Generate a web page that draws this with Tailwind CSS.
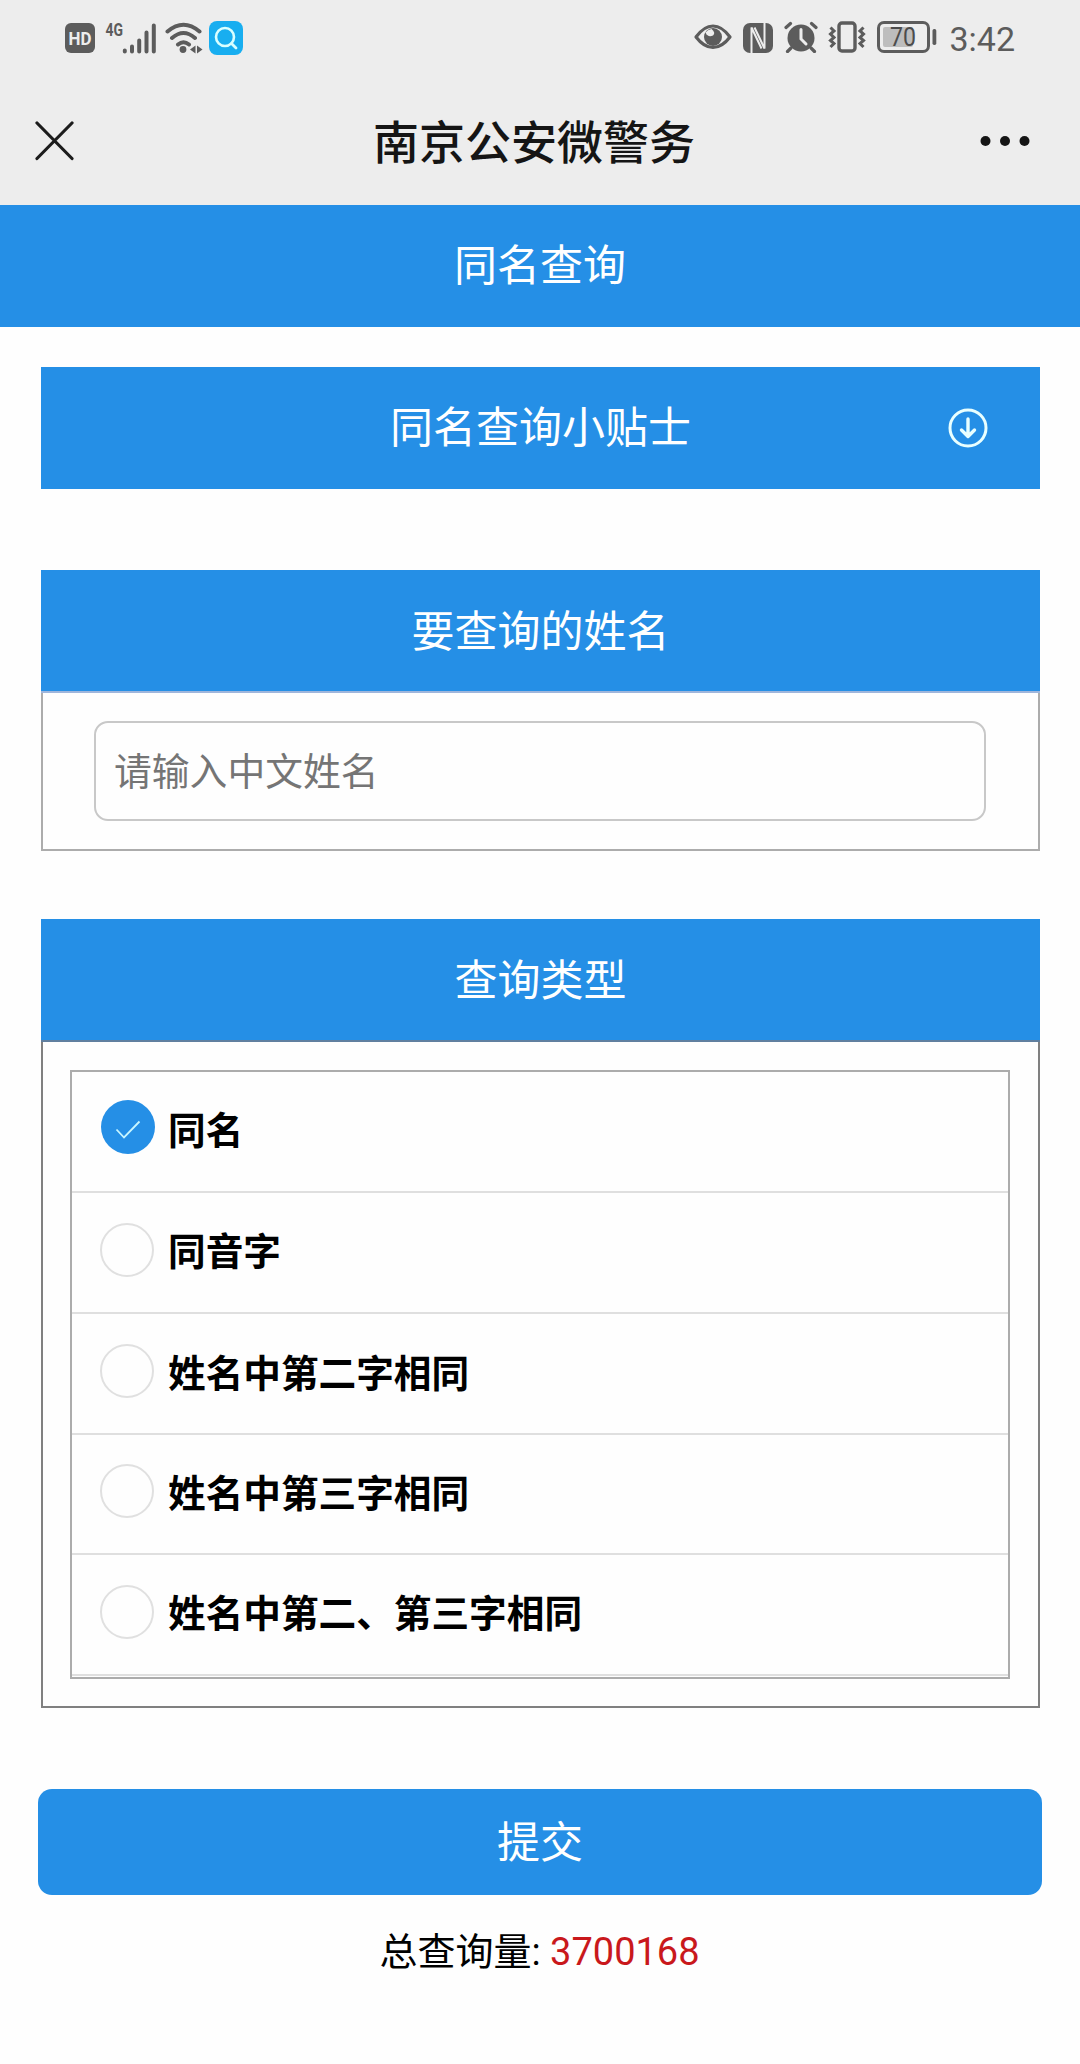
<!DOCTYPE html>
<html lang="zh-CN">
<head>
<meta charset="utf-8">
<title>同名查询</title>
<script src="https://cdn.jsdelivr.net/npm/@tailwindcss/browser@4"></script>
</head>
<body class="w-[1080px] h-[2064px] overflow-hidden bg-[#fefefe] font-['Noto_Sans_CJK_SC',sans-serif] text-black">
<header class="h-[205px] bg-[#ededed]">
  <div class="h-[76px] flex items-center justify-between pl-[65px] pr-[65px] text-[#5c5c5c]">
    <div class="flex items-center">
      <svg class="w-[30px] h-[30px]" viewBox="0 0 30 30"><rect width="30" height="30" rx="6" fill="#5c5c5c"/><text x="15" y="21.5" text-anchor="middle" textLength="23" lengthAdjust="spacingAndGlyphs" font-family="Roboto" font-weight="700" font-size="18" fill="#ededed">HD</text></svg>
      <svg class="w-[52px] h-[36px] ml-[10px] mb-[4px]" viewBox="0 -4 52 36"><text x="0.500" y="14" textLength="17.500" lengthAdjust="spacingAndGlyphs" font-family="Roboto" font-weight="700" font-size="18" fill="#5c5c5c">4G</text><g stroke="#5c5c5c" stroke-width="4" stroke-linecap="round"><path d="M19.800 28.600v.8M27 24.500v5M34.200 18.500v11M41.500 10.500v19M48.800 3.500v26"/></g></svg>
      <svg class="w-[38px] h-[32px] ml-[8px]" viewBox="0 0 38 32"><g fill="none" stroke="#5c5c5c" stroke-width="4" stroke-linecap="round"><path d="M2.500 9.500Q18.500-4 34.500 9.500M7 16Q18.500 6 30 16M13 22.500Q18.500 18 24 22.500"/></g><circle cx="18" cy="27.500" r="3.400" fill="#5c5c5c"/><path d="M25 27.500l5.500-4v8zM37.500 27.500l-5.500-4v8z" fill="#5c5c5c"/></svg>
      <svg class="w-[34px] h-[34px] ml-[6px]" viewBox="0 0 34 34"><rect width="34" height="34" rx="8" fill="#18aef0"/><circle cx="16" cy="16" r="9" fill="none" stroke="#d9ffff" stroke-width="2.600"/><path d="M22.500 22.500l4.500 4.500" stroke="#d9ffff" stroke-width="2.800" stroke-linecap="round"/></svg>
    </div>
    <div class="flex items-center">
      <svg class="w-[38px] h-[28px] mb-[2px]" viewBox="0 0 38 28"><path d="M2 14Q10 3 19 3T36 14Q28 24.500 19 24.500T2 14z" fill="none" stroke="#5c5c5c" stroke-width="3.200" stroke-linejoin="round"/><circle cx="19" cy="14" r="9" fill="#5c5c5c"/><path d="M11.500 9.500Q14 15 19 12.500Q22 9.500 17.500 6Q13.500 6.500 11.500 9.500z" fill="#ededed"/></svg>
      <svg class="w-[30px] h-[30px] ml-[11px] mb-[1px]" viewBox="0 0 30 30"><rect width="30" height="30" rx="7" fill="#5c5c5c"/><path d="M8.500 30V4.500L18.500 25.500M21.500 0V25.500L11.500 4.500" fill="none" stroke="#ededed" stroke-width="2"/></svg>
      <svg class="w-[34px] h-[32px] ml-[11px] mb-[2px]" viewBox="0 0 34 32"><circle cx="17" cy="17" r="13.500" fill="#5c5c5c"/><path d="M2 6.500L6.500 2.500M32 6.500L27.500 2.500M7 27l-3.500 3.500M27 27l3.500 3.500" stroke="#5c5c5c" stroke-width="3.200" stroke-linecap="round"/><path d="M17 8.500v9.500l5 5" fill="none" stroke="#ededed" stroke-width="3" stroke-linecap="round"/></svg>
      <svg class="w-[38px] h-[32px] ml-[10px] mb-[2px]" viewBox="0 0 38 32"><rect x="11" y="2" width="16" height="28" rx="3" fill="none" stroke="#5c5c5c" stroke-width="3.400"/><path d="M2.500 6.500l3.500 3.500-3.500 3 3.500 3.500-3.500 3 3.500 3-3.500 3.500M35.500 6.500L32 10l3.500 3-3.500 3.500 3.500 3-3.500 3 3.500 3.500" fill="none" stroke="#5c5c5c" stroke-width="3"/></svg>
      <svg class="w-[60px] h-[32px] ml-[11px] mr-[1px] mb-[2px]" viewBox="0 0 60 32"><rect x="1.500" y="1.500" width="50" height="29" rx="5.500" fill="none" stroke="#5c5c5c" stroke-width="3"/><rect x="6" y="6" width="30" height="20" rx="2" fill="#bdbdbd"/><rect x="55.500" y="8" width="3.800" height="16" rx="1.700" fill="#5c5c5c"/><text x="26" y="24.500" text-anchor="middle" font-family="Roboto" font-size="25" fill="#4c4c4c" textLength="26" lengthAdjust="spacingAndGlyphs">70</text></svg>
      <span class="ml-[11px] font-['Roboto',sans-serif] text-[34px] leading-none pt-[2px]">3:42</span>
    </div>
  </div>
  <div class="h-[129px] grid grid-cols-[120px_1fr_120px] items-start">
    <svg class="w-[40px] h-[40px] ml-[35px] mt-[45px]" viewBox="0 0 40 40"><path d="M2 2L37 37.500M37 2L2 37.500" stroke="#1c1c1c" stroke-width="3.200" stroke-linecap="round"/></svg>
    <h1 class="mt-[30px] -ml-[12px] text-center text-[46px] leading-[66px] font-medium text-[#151515]">南京公安微警务</h1>
    <svg class="w-[50px] h-[12px] ml-[20px] mt-[59px]" viewBox="0 0 50 12"><g fill="#151515"><circle cx="5.500" cy="6" r="5"/><circle cx="25" cy="6" r="5"/><circle cx="44.500" cy="6" r="5"/></g></svg>
  </div>
</header>
<div class="h-[122px] bg-[#258fe6] text-white text-[43px] leading-[115px] text-center">同名查询</div>
<main class="px-[41px] pt-[40px] w-[1081px]">
  <section class="h-[122px] bg-[#258fe6] text-white text-[43px] leading-[115px] grid grid-cols-[110px_1fr_110px]">
    <span></span>
    <h2 class="text-center">同名查询小贴士</h2>
    <svg class="w-[40px] h-[40px] ml-[18px] mt-[41px]" viewBox="0 0 40 40"><g fill="none" stroke="#e8ffff" stroke-width="3" stroke-linecap="round" stroke-linejoin="round"><circle cx="20" cy="20" r="18"/><path d="M20 11v17M13.500 22l6.500 6.500 6.500-6.500" stroke-width="3.400"/></g></svg>
  </section>
  <section class="mt-[81px] h-[281px] border-2 border-t-0 border-[#acacac]">
    <h2 class="-mx-[2px] h-[123px] border-b-2 border-[#9fb6dc] bg-[#258fe6] text-white text-[43px] leading-[117px] text-center">要查询的姓名</h2>
    <input type="text" placeholder="请输入中文姓名" class="block mt-[28px] ml-[51px] w-[892px] h-[100px] rounded-[14px] border-2 border-[#c8c8c8] pl-[18px] pb-[5px] text-[37.800px] placeholder:text-[#757575] bg-transparent">
  </section>
  <section class="mt-[68px] h-[789px] border-2 border-t-0 border-[#808080]">
    <h2 class="-mx-[2px] h-[123px] border-b-2 border-[#607f9f] bg-[#258fe6] text-white text-[43px] leading-[117px] text-center">查询类型</h2>
    <ul class="mt-[28px] ml-[27px] w-[940px] h-[609px] border-2 border-[#acacac] text-[37.650px] font-bold">
      <li class="h-[121px] border-b-2 border-[#dfdfdf] flex items-center pl-[29px]">
        <svg class="w-[54px] h-[54px] mb-[10px]" viewBox="0 0 54 54"><circle cx="27" cy="27" r="27" fill="#258fe6"/><path d="M15.500 29.500l7.500 8L38.500 21.500" fill="none" stroke="#c8f6ff" stroke-width="1.800"/></svg>
        <span class="ml-[13px] leading-[56px] -mt-[7px]">同名</span>
      </li>
      <li class="h-[121px] border-b-2 border-[#dfdfdf] flex items-center pl-[28px]"><i class="size-[54px] rounded-full border-2 border-[#e0e0e0] mb-[6px]"></i><span class="ml-[14px] leading-[56px] -mt-[7px]">同音字</span></li>
      <li class="h-[121px] border-b-2 border-[#dfdfdf] flex items-center pl-[28px]"><i class="size-[54px] rounded-full border-2 border-[#e0e0e0] mb-[6px]"></i><span class="ml-[14px] leading-[56px] -mt-[6px]">姓名中第二字相同</span></li>
      <li class="h-[120px] border-b-2 border-[#dfdfdf] flex items-center pl-[28px]"><i class="size-[54px] rounded-full border-2 border-[#e0e0e0] mb-[7px]"></i><span class="ml-[14px] leading-[56px] -mt-[6px]">姓名中第三字相同</span></li>
      <li class="h-[121px] border-b-2 border-[#dfdfdf] flex items-center pl-[28px]"><i class="size-[54px] rounded-full border-2 border-[#e0e0e0] mb-[6px]"></i><span class="ml-[14px] leading-[56px] -mt-[7px]">姓名中第二、第三字相同</span></li>
    </ul>
  </section>
  <button class="block mt-[81px] -ml-[3px] w-[1004px] h-[106px] rounded-[14px] bg-[#258fe6] text-white text-[43px] pb-[6px]">提交</button>
  <p class="mt-[29px] -ml-[2px] text-center text-[38px] leading-[56px] font-['Roboto','Noto_Sans_CJK_SC',sans-serif]">总查询量: <span class="text-[#c9181c]">3700168</span></p>
</main>
</body>
</html>
